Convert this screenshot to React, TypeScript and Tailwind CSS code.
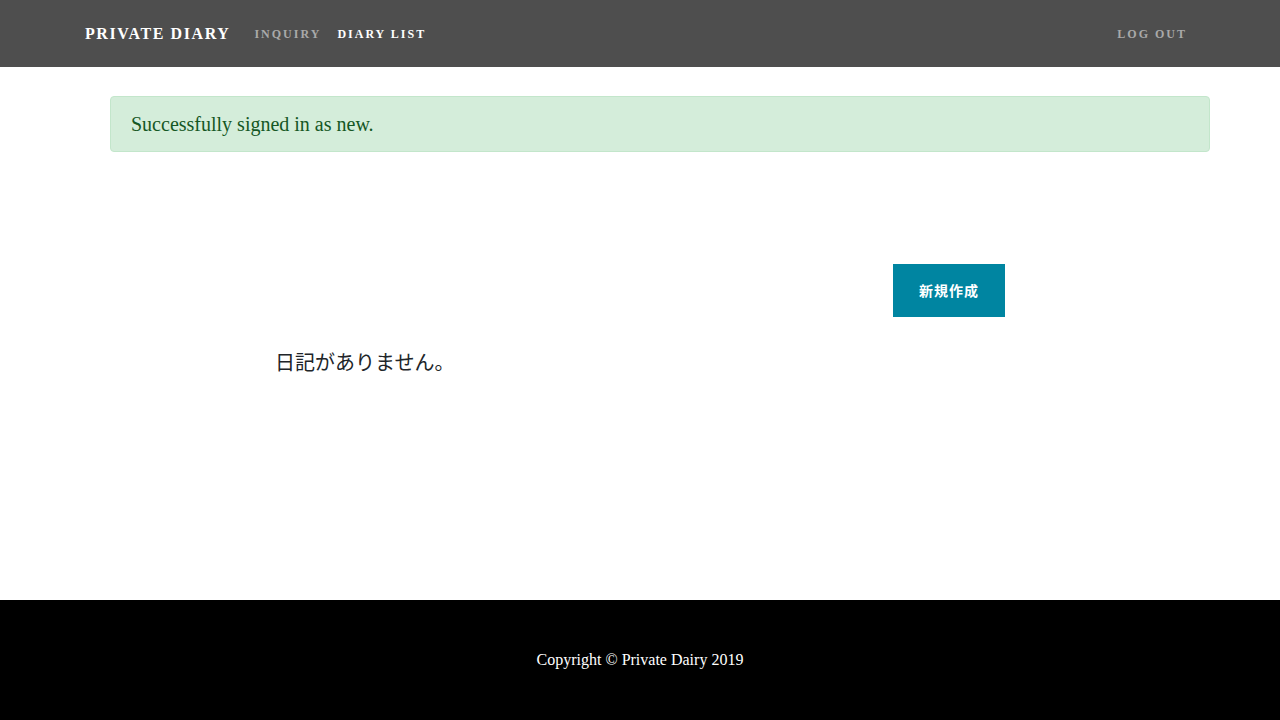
export default function App() {
  return (
    <div className="flex min-h-screen flex-col bg-white font-['Liberation_Serif',serif] text-[#212529]">
      {/* Navigation */}
      <nav className="h-[67px] bg-[#4e4e4e]">
        <div className="mx-auto flex h-full w-[1140px] items-center px-[15px]">
          <a className="mr-4 text-[16px] font-bold uppercase tracking-[1.6px] text-white">
            Private Diary
          </a>
          <ul className="mb-[2px] flex items-center">
            <li>
              <a className="px-2 text-[12px] font-bold uppercase tracking-[2px] text-[#a9a9a9]">
                Inquiry
              </a>
            </li>
            <li>
              <a className="px-2 text-[12px] font-bold uppercase tracking-[2px] text-white">
                Diary List
              </a>
            </li>
          </ul>
          <ul className="mb-[2px] ml-auto flex items-center">
            <li>
              <a className="px-2 text-[12px] font-bold uppercase tracking-[2px] text-[#a9a9a9]">
                Log out
              </a>
            </li>
          </ul>
        </div>
      </nav>

      {/* Main */}
      <main className="flex-1">
        <div className="ml-[110px] mt-[29px] w-[1100px] rounded border border-[#c3e6cb] bg-[#d4edda] px-5 py-3 text-[20px] leading-[30px] text-[#155724]">
          Successfully signed in as new.
        </div>

        <div className="mx-auto mt-[112px] w-[730px]">
          <div className="flex justify-end">
            <button className="border border-[#0085a1] bg-[#0085a1] px-[25px] py-[15px] font-['Noto_Sans_CJK_JP',sans-serif] text-[14px] font-bold leading-[21px] tracking-[1px] text-white">
              新規作成
            </button>
          </div>
          <p className="mt-[30px] font-['Noto_Sans_CJK_JP',sans-serif] text-[20px] leading-[30px] text-[#212529]">
            日記がありません。
          </p>
        </div>
      </main>

      {/* Footer */}
      <footer className="h-[120px] bg-black pt-[48px] text-center text-[16px] leading-[24px] text-white">
        Copyright © Private Dairy 2019
      </footer>
    </div>
  );
}
